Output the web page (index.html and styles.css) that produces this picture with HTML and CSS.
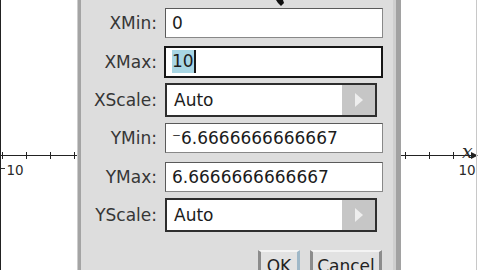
FILE: index.html
```html
<!DOCTYPE html>
<html>
<head>
<meta charset="utf-8">
<link rel="stylesheet" href="styles.css">
</head>
<body>
<div class="screen">
  <div class="graph graph-left">
    <svg width="78" height="270" viewBox="0 0 78 270">
      <line x1="0.5" y1="0" x2="0.5" y2="270" stroke="#222" stroke-width="1"/>
      <line x1="0" y1="155.5" x2="78" y2="155.5" stroke="#222" stroke-width="1"/>
      <g stroke="#222" stroke-width="1">
        <line x1="2.5" y1="152" x2="2.5" y2="159"/>
        <line x1="26.5" y1="152" x2="26.5" y2="159"/>
        <line x1="50.5" y1="152" x2="50.5" y2="159"/>
        <line x1="74.5" y1="152" x2="74.5" y2="159"/>
      </g>
      <line x1="1" y1="168.5" x2="5" y2="168.5" stroke="#333" stroke-width="1"/>
      <text x="6.5" y="175" class="axis-num">10</text>
    </svg>
  </div>
  <div class="dialog">
    <div class="form">
      <label class="lbl">XMin:</label>
      <div class="field"><div class="input">0</div></div>
      <label class="lbl">XMax:</label>
      <div class="field"><div class="input focused"><span class="sel">10</span></div></div>
      <label class="lbl">XScale:</label>
      <div class="field"><div class="select"><span class="val">Auto</span><span class="arrow"><svg width="14" height="20" viewBox="0 0 14 20"><path d="M3 3 L11 10 L3 17 Z" fill="#eeeeee"/></svg></span></div></div>
      <label class="lbl">YMin:</label>
      <div class="field"><div class="input">⁻6.6666666666667</div></div>
      <label class="lbl">YMax:</label>
      <div class="field"><div class="input">6.6666666666667</div></div>
      <label class="lbl">YScale:</label>
      <div class="field"><div class="select"><span class="val">Auto</span><span class="arrow"><svg width="14" height="20" viewBox="0 0 14 20"><path d="M3 3 L11 10 L3 17 Z" fill="#eeeeee"/></svg></span></div></div>
    </div>
    <div class="sep"></div>
    <div class="buttons">
      <div class="btn btn-ok">OK</div>
      <div class="btn btn-cancel">Cancel</div>
    </div>
  </div>
  <div class="graph graph-right">
    <svg width="78" height="270" viewBox="0 0 78 270">
      <line x1="0" y1="155.5" x2="75" y2="155.5" stroke="#222" stroke-width="1"/>
      <path d="M70 152 L77 155.5 L70 159 Z" fill="#222"/>
      <g stroke="#222" stroke-width="1">
        <line x1="4.5" y1="152" x2="4.5" y2="159"/>
        <line x1="28.5" y1="152" x2="28.5" y2="159"/>
        <line x1="52.5" y1="152" x2="52.5" y2="159"/>
      </g>
      <text x="61" y="158" class="axis-var">x</text>
      <text x="57.5" y="175" class="axis-num">10</text>
      <line x1="75.5" y1="0" x2="75.5" y2="270" stroke="#c8c8c8" stroke-width="1"/>
    </svg>
  </div>
</div>
<svg class="pointer" width="12" height="8" viewBox="0 0 12 8">
  <path d="M2 0 L9 0 L10 3 L7 6 L4 3 Z" fill="#111"/>
</svg>
</body>
</html>
```

FILE: styles.css
```css
html, body {
  margin: 0;
  padding: 0;
  width: 480px;
  height: 270px;
  overflow: hidden;
  background: #ffffff;
  font-family: "DejaVu Sans", Verdana, sans-serif;
}

.screen {
  display: flex;
  width: 480px;
  height: 270px;
  position: relative;
}

.graph {
  width: 78px;
  height: 270px;
  flex: none;
  background: #ffffff;
}

.graph-left { width: 78px; }
.graph-right { width: 79px; }

.graph svg { display: block; }

.axis-num {
  font-family: "DejaVu Sans", sans-serif;
  font-size: 13.5px;
  fill: #2a2a2a;
}

.axis-var {
  font-family: "DejaVu Serif", serif;
  font-style: italic;
  font-size: 19px;
  fill: #2a2a2a;
}

.dialog {
  width: 323px;
  flex: none;
  height: 270px;
  box-sizing: border-box;
  background: #dddddd;
  border-left: 3px solid #a4a4a4;
  border-right: 5px solid #a2a2a2;
  box-shadow: inset -3px 0 0 #cfcfcf, -1px 0 0 #cdcdcd;
  display: flex;
  flex-direction: column;
  padding-top: 4px;
}

.form {
  display: grid;
  grid-template-columns: 75px 218px;
  grid-auto-rows: 38.4px;
  column-gap: 9px;
  align-items: center;
}

.lbl {
  text-align: right;
  font-size: 17px;
  color: #363636;
  white-space: nowrap;
  margin-right: -1px;
}

.field {
  display: flex;
  align-items: center;
}

.input {
  width: 218px;
  height: 30px;
  box-sizing: border-box;
  background: #ffffff;
  border: 1px solid #5a5a5a;
  border-bottom-color: #888;
  border-right-color: #888;
  font-size: 17px;
  color: #1c1c1c;
  padding-left: 6px;
  display: flex;
  align-items: center;
  white-space: nowrap;
  overflow: hidden;
}

.input.focused {
  width: 220px;
  height: 32px;
  margin-left: -1px;
  border: 2px solid #161616;
  padding-left: 6px;
}

.sel {
  background: #a8d6e4;
  line-height: 23px;
  border-right: 2px solid #1a1a1a;
}

.select {
  width: 212px;
  height: 34px;
  box-sizing: border-box;
  background: #ffffff;
  border: 2px solid #2e2e2e;
  display: flex;
  align-items: stretch;
  font-size: 17px;
  color: #1c1c1c;
}

.select .val {
  flex: 1;
  display: flex;
  align-items: center;
  padding-left: 7px;
}

.select .arrow {
  width: 33px;
  background: #c6c6c6;
  display: flex;
  align-items: center;
  justify-content: center;
}

.select .arrow svg { display: block; filter: blur(0.6px); }

.sep {
  margin: 7.6px 9px 0 7px;
  height: 3px;
  background: #6e6e6e;
}

.buttons {
  display: flex;
  margin-top: 8px;
  padding-left: 177px;
  gap: 10px;
}

.btn {
  height: 30px;
  box-sizing: border-box;
  border-top: 2px solid #f4f4f4;
  border-left: 3px solid #8c8c8c;
  border-right: 3px solid #8c8c8c;
  background: #e2e2e2;
  font-size: 17px;
  color: #222;
  padding-top: 4px;
  text-align: center;
}

.btn-ok {
  width: 42px;
  border-right-color: #9fb8c8;
}

.btn-cancel {
  width: 72px;
}

.pointer {
  position: absolute;
  left: 274px;
  top: 0;
}
```
